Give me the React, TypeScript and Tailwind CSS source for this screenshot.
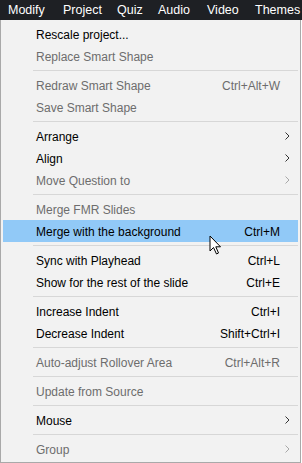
type Item =
  | { kind: "sep" }
  | { kind: "item"; label: string; shortcut?: string; disabled?: boolean; sub?: boolean; active?: boolean };

// menu bar labels with their slot widths (taken from the screenshot)
const TOP: [string, string][] = [
  ["Modify", "w-[55px]"],
  ["Project", "w-[54px]"],
  ["Quiz", "w-[41px]"],
  ["Audio", "w-[49px]"],
  ["Video", "w-[48px]"],
  ["Themes", "flex-1"],
];

const ITEMS: Item[] = [
  { kind: "item", label: "Rescale project..." },
  { kind: "item", label: "Replace Smart Shape", disabled: true },
  { kind: "sep" },
  { kind: "item", label: "Redraw Smart Shape", shortcut: "Ctrl+Alt+W", disabled: true },
  { kind: "item", label: "Save Smart Shape", disabled: true },
  { kind: "sep" },
  { kind: "item", label: "Arrange", sub: true },
  { kind: "item", label: "Align", sub: true },
  { kind: "item", label: "Move Question to", sub: true, disabled: true },
  { kind: "sep" },
  { kind: "item", label: "Merge FMR Slides", disabled: true },
  { kind: "item", label: "Merge with the background", shortcut: "Ctrl+M", active: true },
  { kind: "sep" },
  { kind: "item", label: "Sync with Playhead", shortcut: "Ctrl+L" },
  { kind: "item", label: "Show for the rest of the slide", shortcut: "Ctrl+E" },
  { kind: "sep" },
  { kind: "item", label: "Increase Indent", shortcut: "Ctrl+I" },
  { kind: "item", label: "Decrease Indent", shortcut: "Shift+Ctrl+I" },
  { kind: "sep" },
  { kind: "item", label: "Auto-adjust Rollover Area", shortcut: "Ctrl+Alt+R", disabled: true },
  { kind: "sep" },
  { kind: "item", label: "Update from Source", disabled: true },
  { kind: "sep" },
  { kind: "item", label: "Mouse", sub: true },
  { kind: "sep" },
  { kind: "item", label: "Group", sub: true, disabled: true },
];

function Chevron({ disabled }: { disabled?: boolean }) {
  return (
    <svg width="5" height="8" viewBox="0 0 5 8" className="block">
      <path d="M0.5 0.5 L4 4 L0.5 7.5" fill="none" stroke={disabled ? "#a8a8a8" : "#333"} strokeWidth="1" />
    </svg>
  );
}

export default function App() {
  return (
    <div
      className="relative w-[302px] h-[463px] bg-white text-[12px] overflow-hidden"
      style={{ fontFamily: '"Segoe UI", "Liberation Sans", Arial, sans-serif' }}
    >
      <div className="flex h-[20px] items-center bg-[#1e2024] text-[12.5px] text-white">
        {TOP.map(([t, w]) => (
          <div key={t} className={"pl-[8px] leading-[20px] whitespace-nowrap " + w}>
            {t}
          </div>
        ))}
      </div>

      <div className="w-[301px] h-[443px] border border-t-0 border-[#a9a9a9] bg-[#f2f2f2] pt-[3px] pb-[2px] px-[2px]">
        {ITEMS.map((it, i) =>
          it.kind === "sep" ? (
            <div key={i} className="flex h-[7px] items-center pl-[30px]">
              <div className="h-px w-full bg-[#d7d7d7]" />
            </div>
          ) : (
            <div
              key={i}
              className={
                "flex h-[22px] items-center pl-[33px] pr-[8px] " +
                (it.active ? "bg-[#91c9f7] " : "") +
                (it.disabled ? "text-[#6d6d6d]" : "text-black")
              }
            >
              <span className="flex-1 pt-px">{it.label}</span>
              {it.shortcut && <span className="mr-[10px] pt-px">{it.shortcut}</span>}
              {it.sub && <Chevron disabled={it.disabled} />}
            </div>
          )
        )}
      </div>

      <svg className="absolute left-[209px] top-[235px]" width="14" height="21" viewBox="0 0 14 21">
        <path
          d="M1 1 L1 16 L4.5 12.5 L7.5 19 L9.5 18 L6.8 11.8 L11.5 11.8 Z"
          fill="#fff"
          stroke="#000"
          strokeWidth="1"
          strokeLinejoin="miter"
        />
      </svg>
    </div>
  );
}
